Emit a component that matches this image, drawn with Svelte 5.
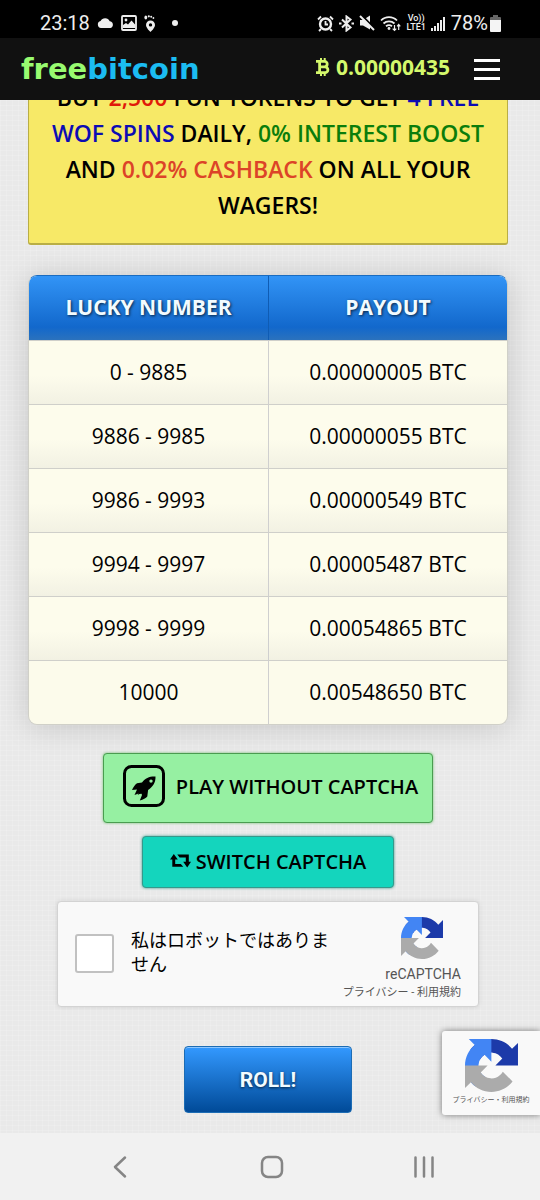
<script lang="ts">
	const balance = "0.00000435";

	const payouts = [
		{ range: "0 - 9885", amount: "0.00000005" },
		{ range: "9886 - 9985", amount: "0.00000055" },
		{ range: "9986 - 9993", amount: "0.00000549" },
		{ range: "9994 - 9997", amount: "0.00005487" },
		{ range: "9998 - 9999", amount: "0.00054865" },
		{ range: "10000", amount: "0.00548650" },
	];

	let human = $state(false);
</script>

{#snippet captchaLogo(size: number)}
	<svg width={size} height={size} viewBox="0 0 64 64" aria-hidden="true">
		<path
			fill="#1c3aa9"
			d="M64 31.955l-.033-1.37V4.687l-7.16 7.16C50.948 4.674 42.033.093 32.05.093c-10.4 0-19.622 4.96-25.458 12.64l11.736 11.86a15.55 15.55 0 0 1 4.754-5.334c2.05-1.6 4.952-2.906 8.968-2.906.485 0 .86.057 1.135.163 4.976.393 9.288 3.14 11.828 7.124l-8.307 8.307L64 31.953"
		/>
		<path
			fill="#4285f4"
			d="M31.862.094l-1.37.033H4.594l7.16 7.16C4.58 13.147 0 22.06 0 32.046c0 10.4 4.96 19.622 12.64 25.458L24.5 45.768a15.55 15.55 0 0 1-5.334-4.754c-1.6-2.05-2.906-4.952-2.906-8.968 0-.485.057-.86.163-1.135.393-4.976 3.14-9.288 7.124-11.828l8.307 8.307L31.86.095"
		/>
		<path
			fill="#ababab"
			d="M.001 32.045l.033 1.37v25.898l7.16-7.16c5.86 7.173 14.774 11.754 24.76 11.754 10.4 0 19.622-4.96 25.458-12.64l-11.736-11.86a15.55 15.55 0 0 1-4.754 5.334c-2.05 1.6-4.952 2.906-8.968 2.906-.485 0-.86-.057-1.135-.163-4.976-.393-9.288-3.14-11.828-7.124l8.307-8.307c-10.522.04-22.4.066-27.295-.005"
		/>
	</svg>
{/snippet}

<div class="screen">
	<div class="status">
		<div class="status-left">
			<span class="clock">23:18</span>
			<svg width="17" height="12" viewBox="0 0 17 12" fill="#eee">
				<path d="M4 11a3.500 3.500 0 0 1-.4-6.900A5 5 0 0 1 12.700 4.200 3.500 3.500 0 0 1 13.500 11z" />
			</svg>
			<svg width="16" height="16" viewBox="0 0 16 16">
				<rect x="1" y="1" width="14" height="14" rx="1" fill="none" stroke="#eee" stroke-width="1.800" />
				<circle cx="5" cy="5" r="1.400" fill="#eee" />
				<path d="M2 13V10l3-2 2 1.500 3.500-4 4 4.500v3z" fill="#eee" />
			</svg>
			<svg width="12" height="17" viewBox="0 0 12 17" fill="#eee">
				<path fill-rule="evenodd" d="M6.500 5.500a4.500 4.500 0 0 0-4.500 4.500c0 3 4.500 7 4.500 7s4.500-4 4.500-7a4.500 4.500 0 0 0-4.500-4.500zm0 2.700a1.700 1.700 0 1 1 0 3.400 1.700 1.700 0 0 1 0-3.400z" />
				<ellipse cx="1.800" cy="2.500" rx="1.400" ry="2" />
				<circle cx="4.800" cy="1.300" r="1.100" />
				<circle cx="7.200" cy="1.800" r="1" />
				<circle cx="9.400" cy="3" r=".9" />
			</svg>
			<span class="dot"></span>
		</div>
		<div class="status-right">
			<svg width="17" height="17" viewBox="0 0 17 17" fill="none" stroke="#eee">
				<circle cx="8.500" cy="9" r="5.500" stroke-width="2.400" />
				<path d="M8.500 6v3.500H11M1 4.500l3-3M16 4.500l-3-3M4 14l-2 2M13 14l2 2" stroke-width="1.800" />
			</svg>
			<svg width="15" height="17" viewBox="0 0 15 17" fill="none" stroke="#eee" stroke-width="2">
				<path d="M3 4.500l8.500 8L7.500 15.500V1.500l4 3-8.500 8" />
				<path d="M0 8.500h2.500M12.500 8.500H15" stroke-width="2.200" />
			</svg>
			<svg width="16" height="16" viewBox="0 0 16 16">
				<path d="M1 5h3l7-4.500v14L4 10.500H1z" fill="#eee" />
				<path d="M2.500 0l13 13.500" stroke="#000" stroke-width="2" />
				<path d="M1 1l14 14" stroke="#eee" stroke-width="2" />
			</svg>
			<svg width="21" height="17" viewBox="0 0 21 17" fill="none" stroke="#eee" stroke-width="1.800">
				<path d="M1 5.500a11 11 0 0 1 16 0M3.500 8.500a8 8 0 0 1 11 0M6 11.200a5 5 0 0 1 6 0" />
				<circle cx="9" cy="13.500" r="1.400" fill="#eee" stroke="none" />
				<path d="M14.500 10v5.500m-1.800-1.800l1.800 1.800 1.800-1.800M18.700 15V9.500m-1.600 1.800l1.600-1.800 1.600 1.800" stroke-width="1.200" />
			</svg>
			<span class="volte"><span>Vo))</span><span>LTE1</span></span>
			<svg width="15" height="15" viewBox="0 0 15 15" fill="#eee">
				<path d="M0 12h2v3H0zM3 10h2v5H3zM6 7h2v8H6zM9 4h2v11H9zM12 1h2v14h-2z" />
			</svg>
			<span class="level">78%</span>
			<svg width="11" height="17" viewBox="0 0 11 17">
				<path d="M3 0h5v2h2a1 1 0 0 1 1 1v2H0V3a1 1 0 0 1 1-1h2z" fill="#666" />
				<path d="M0 5h11v11a1 1 0 0 1-1 1H1a1 1 0 0 1-1-1z" fill="#f4f4f4" />
			</svg>
		</div>
	</div>

	<header>
		<a class="logo" href="/"><span>free</span>bitcoin</a>
		<div class="account">
			<div class="balance">
				<svg width="14" height="18" viewBox="0 0 14 18" fill="none" stroke="#d4f86c" stroke-width="2.800">
					<path d="M0 3.400h8.500a2.700 2.700 0 0 1 0 5.400H4M0 14.600h9a2.900 2.900 0 0 0 0-5.800H4M3.600 3.400v11.200" />
					<path d="M5 0v3M8.700 0v3M5 15v3M8.700 15v3" stroke-width="2" />
				</svg>
				<span>{balance}</span>
			</div>
			<button class="menu" aria-label="Menu"><i></i><i></i><i></i></button>
		</div>
	</header>

	<main>
		<p class="promo">
			BUY <span class="red">2,500</span> FUN TOKENS TO GET <span class="blue">4 FREE WOF SPINS</span>
			DAILY, <span class="green">0% INTEREST BOOST</span> AND
			<span class="orange">0.02% CASHBACK</span> ON ALL YOUR WAGERS!
		</p>

		<table>
			<thead>
				<tr><th>LUCKY NUMBER</th><th>PAYOUT</th></tr>
			</thead>
			<tbody>
				{#each payouts as row}
					<tr><td>{row.range}</td><td>{row.amount} BTC</td></tr>
				{/each}
			</tbody>
		</table>

		<button class="play">
			<svg width="42" height="42" viewBox="0 0 42 42">
				<rect x="1.500" y="1.500" width="39" height="39" rx="7" fill="none" stroke="#000" stroke-width="3" />
				<path
					fill-rule="evenodd"
					d="M32.500 11.500c-6-.3-10 1.500-13.500 6l-5 .8c-2.200 1.500-3.700 4-5 6.700l5-.5-2.500 5.500 4-1.500-1 1.500 2-1 2-.3.500 1.200-2.200 5.600c3.500-.8 6-2.200 7.500-4l.8-6.500c5-3.500 7.600-7.500 7.400-13.500zM28 14.400a1.700 1.700 0 1 1 0 3.400 1.700 1.700 0 0 1 0-3.400z"
				/>
			</svg>
			PLAY WITHOUT CAPTCHA
		</button>

		<button class="switch">
			<svg width="21" height="14" viewBox="0 0 21 14">
				<path d="M3.800 0L0 5.500h2.300v7.200h11L10.800 10H5.200V5.500h2.600zM7.300.6h11.500v7.200H21L17.200 13.400 13.200 7.800h2.600V3.400H9.600z" />
			</svg>
			SWITCH CAPTCHA
		</button>

		<div class="captcha">
			<label>
				<input type="checkbox" bind:checked={human} />
				<span>私はロボットではありません</span>
			</label>
			<div class="brand">
				{@render captchaLogo(42)}
				<span class="brand-name">reCAPTCHA</span>
				<div class="terms">
					<a href="/privacy">プライバシー</a> - <a href="/terms">利用規約</a>
				</div>
			</div>
		</div>

		<button class="roll">ROLL!</button>
	</main>

	<nav>
		<button aria-label="Back">
			<svg width="32" height="32" viewBox="0 0 32 32"><path d="M21 6.500L11 16l10 9.500" /></svg>
		</button>
		<button aria-label="Home">
			<svg width="32" height="32" viewBox="0 0 32 32"><rect x="6" y="6" width="20" height="20" rx="6" /></svg>
		</button>
		<button aria-label="Recent apps">
			<svg width="32" height="32" viewBox="0 0 32 32"><path d="M7.500 6.500v19M16 6.500v19M24.500 6.500v19" /></svg>
		</button>
	</nav>

	<aside>
		{@render captchaLogo(53)}
		<div class="terms"><a href="/privacy">プライバシー</a>・<a href="/terms">利用規約</a></div>
	</aside>
</div>

<style>
	:global(body) {
		margin: 0;
		background: #e9e9e9;
	}

	.screen {
		position: relative;
		display: flex;
		flex-direction: column;
		min-height: 100vh;
		font-family: "Open Sans", "Noto Sans", sans-serif;
		color: #000;
		background:
			repeating-linear-gradient(0deg, rgba(255, 255, 255, 0.15) 0 1px, transparent 1px 5px),
			repeating-linear-gradient(90deg, rgba(255, 255, 255, 0.15) 0 1px, transparent 1px 6px),
			#e9e9e9;
	}

	button {
		padding: 0;
		border: none;
		font-family: inherit;
		color: inherit;
		cursor: pointer;
	}

	svg {
		flex: none;
	}

	a {
		color: inherit;
		text-decoration: none;
	}

	.status {
		display: flex;
		justify-content: space-between;
		box-sizing: border-box;
		height: 38px;
		padding: 8px 39px 0 40px;
		background: #000;
		color: #eee;
		font-family: Roboto, sans-serif;
		font-size: 20px;
	}

	.status-left,
	.status-right {
		display: flex;
		align-items: center;
		gap: 7px;
	}

	.status-right {
		gap: 5px;
	}

	.dot {
		width: 6px;
		height: 6px;
		margin-left: 9px;
		border-radius: 50%;
		background: #eee;
	}

	.volte {
		display: flex;
		flex-direction: column;
		align-items: center;
		font-size: 9px;
		line-height: 9px;
		font-weight: 500;
	}

	.level {
		margin-right: -3px;
	}

	header {
		display: flex;
		align-items: center;
		justify-content: space-between;
		box-sizing: border-box;
		height: 62px;
		padding: 0 40px 0 21px;
		background: #111;
	}

	.logo {
		font-family: "DejaVu Sans", sans-serif;
		font-size: 29px;
		line-height: 32px;
		font-weight: 700;
		color: #1bbcf2;
	}

	.logo span {
		color: #98fb70;
	}

	.account {
		display: flex;
		align-items: center;
		gap: 24px;
	}

	.balance {
		display: flex;
		align-items: center;
		gap: 6px;
		padding-bottom: 4px;
		color: #d4f86c;
		font-size: 21px;
		font-weight: 700;
	}

	.menu {
		display: flex;
		flex-direction: column;
		gap: 6px;
		width: 26px;
		background: none;
	}

	.menu i {
		height: 3px;
		background: #fff;
	}

	main {
		flex: 1;
		display: flex;
		flex-direction: column;
		align-items: center;
		padding: 0 32px 20px 28px;
		overflow: hidden;
	}

	/* scrolled partly under the header */
	.promo {
		box-sizing: border-box;
		width: 100%;
		margin: -22px 0 30px;
		padding: 0 16px 20px;
		border: 1px solid #b9ae45;
		border-bottom-width: 2px;
		border-radius: 3px;
		background: #f7e967;
		font-size: 23px;
		line-height: 36px;
		font-weight: 600;
		text-align: center;
	}

	.red {
		color: #e01a0a;
	}

	.blue {
		color: #0c0cb4;
	}

	.green {
		color: #0b7d0b;
	}

	.orange {
		color: #dc4428;
	}

	table {
		width: 100%;
		margin-bottom: 28px;
		border: 1px solid #d0d0c8;
		border-top-color: #1a6cc0;
		border-radius: 9px;
		border-spacing: 0;
		table-layout: fixed;
		overflow: hidden;
		background: #fcfbeb;
		box-shadow: 0 2px 30px rgba(0, 0, 0, 0.16);
		font-size: 21px;
		text-align: center;
	}

	th,
	td {
		box-sizing: border-box;
		height: 64px;
		padding: 0 0 2px;
	}

	th {
		background: linear-gradient(#3294f6, #1268cc 80%, #2b72bd);
		color: #f2fbff;
		font-weight: 700;
		text-shadow: 1px 1px 3px rgba(0, 0, 0, 0.7);
	}

	td {
		border-top: 1px solid #cfcfca;
	}

	tr:not(:last-child) td {
		background: linear-gradient(#fdfcec 55%, #f2f1e3);
	}

	th + th {
		border-left: 1px solid #0f5cb4;
	}

	td + td {
		border-left: 1px solid #cfcfcf;
	}

	.play,
	.switch {
		display: flex;
		align-items: center;
		justify-content: center;
		border-radius: 4px;
		font-size: 20px;
		font-weight: 600;
	}

	.play {
		gap: 11px;
		height: 70px;
		margin-bottom: 13px;
		padding: 0 14px 4px 19px;
		border: 1px solid #4a9c50;
		background: #96f0a2;
		box-shadow: 0 0 3px #6fbf6f;
	}

	.switch {
		gap: 5px;
		height: 52px;
		margin-bottom: 13px;
		padding: 0 27px 2px;
		border: 1px solid #36998b;
		background: #14d5bd;
		box-shadow: 0 0 3px #36998b;
	}

	.captcha {
		display: flex;
		justify-content: space-between;
		box-sizing: border-box;
		width: 422px;
		max-width: 100%;
		height: 106px;
		margin-bottom: 39px;
		padding: 0 17px;
		border: 1px solid #d3d3d3;
		border-radius: 4px;
		background: #f9f9f9;
		box-shadow: 0 0 5px rgba(0, 0, 0, 0.1);
		font-family: Roboto, "Noto Sans CJK JP", sans-serif;
	}

	label {
		display: flex;
		align-items: center;
		gap: 17px;
		padding-bottom: 2px;
		font-size: 18px;
		line-height: 24px;
	}

	label span {
		width: 205px;
	}

	input {
		flex: none;
		appearance: none;
		width: 39px;
		height: 39px;
		margin: 0;
		border: 2px solid #c1c1c1;
		border-radius: 3px;
		background: #fff;
	}

	input:checked {
		background: #4285f4;
	}

	.brand {
		display: flex;
		flex-direction: column;
		align-items: flex-end;
		padding-top: 15px;
		color: #555;
		white-space: nowrap;
	}

	.brand svg {
		margin-right: 18px;
	}

	.brand-name {
		margin-top: 5px;
		font-size: 14px;
		line-height: 20px;
	}

	.brand .terms {
		font-size: 11px;
		line-height: 18px;
	}

	.roll {
		width: 168px;
		height: 67px;
		border: 1px solid #1c6cb4;
		border-radius: 4px;
		background: linear-gradient(#3399ff, #004a98);
		box-shadow: inset 0 1px 0 #8cc6ff;
		color: #f2fbff;
		font-family: Roboto, sans-serif;
		font-size: 21px;
		font-weight: 700;
		text-shadow: 0 1px 3px rgba(0, 0, 0, 0.7);
	}

	nav {
		display: flex;
		align-items: center;
		justify-content: center;
		gap: 120px;
		height: 68px;
		padding-left: 4px;
		background: #f1f1f1;
	}

	nav button {
		display: flex;
		background: none;
	}

	nav svg {
		fill: none;
		stroke: #858585;
		stroke-width: 2.5;
		stroke-linecap: round;
		stroke-linejoin: round;
	}

	/* floating badge */
	aside {
		position: absolute;
		right: 0;
		bottom: 86px;
		display: flex;
		flex-direction: column;
		align-items: center;
		box-sizing: border-box;
		width: 98px;
		height: 84px;
		padding-top: 8px;
		border-radius: 3px 0 0 3px;
		background: #f9f9f9;
		box-shadow: 0 0 6px rgba(0, 0, 0, 0.5);
		color: #555;
		font-family: Roboto, "Noto Sans CJK JP", sans-serif;
		white-space: nowrap;
	}

	aside .terms {
		font-size: 7px;
		line-height: 16px;
	}
</style>
